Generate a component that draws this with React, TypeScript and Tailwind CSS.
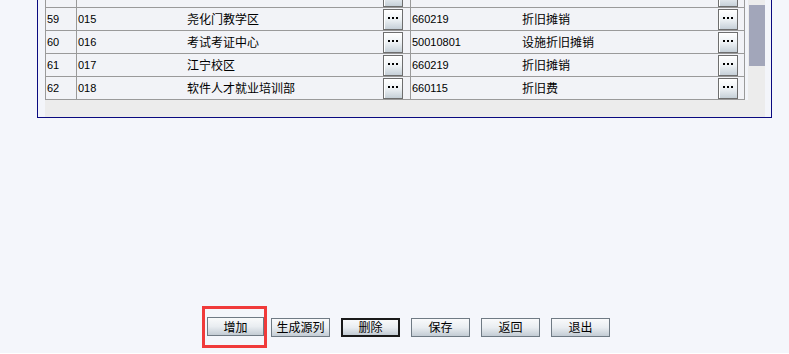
import React from "react";

type Row = { no: string; code: string; name: string; acct: string; acctName: string };

// rows visible in the grid (row 58 only shows its bottom edge)
const rows: Row[] = [
  { no: "", code: "", name: "", acct: "", acctName: "" },
  { no: "59", code: "015", name: "尧化门教学区", acct: "660219", acctName: "折旧摊销" },
  { no: "60", code: "016", name: "考试考证中心", acct: "50010801", acctName: "设施折旧摊销" },
  { no: "61", code: "017", name: "江宁校区", acct: "660219", acctName: "折旧摊销" },
  { no: "62", code: "018", name: "软件人才就业培训部", acct: "660115", acctName: "折旧费" },
];

const numFont = { fontFamily: '"Liberation Sans", "DejaVu Sans", sans-serif' };
const cjkFont = { fontFamily: '"Noto Sans CJK SC", "Liberation Sans", sans-serif' };

function DotsButton() {
  return (
    <div className="ml-auto mr-[7px] flex h-[21px] w-[20px] items-center justify-center border border-[#6e6e6e] bg-gradient-to-b from-[#ffffff] via-[#eef2f5] to-[#c6d0d8] shadow-[inset_1px_1px_0_#ffffff]">
      <div className="mt-[-3px] flex gap-[2px]">
        <span className="h-[2px] w-[2px] bg-black" />
        <span className="h-[2px] w-[2px] bg-black" />
        <span className="h-[2px] w-[2px] bg-black" />
      </div>
    </div>
  );
}

function ToolButton({ label, focused }: { label: string; focused?: boolean }) {
  return (
    <button
      className={
        "flex h-[19px] w-[59px] items-center justify-center bg-gradient-to-b from-[#f9fafb] via-[#e9edf1] to-[#c3ccd4] text-[12px] leading-none text-black" +
        (focused ? " border-2 border-[#1a1a1a]" : " border border-[#6f7a84]")
      }
      style={cjkFont}
    >
      {label}
    </button>
  );
}

export default function App() {
  return (
    <div className="flex h-[354px] w-[789px] flex-col overflow-hidden border-b border-white bg-[#f4f6fb]">
      {/* grid frame, top is scrolled out of view */}
      <div className="mt-[-15px] ml-[37px] flex w-[735px] flex-col border-x border-b border-[#0a0a80] bg-[#f3f5fa] pl-[7px] pr-[6px]">
        <div className="flex">
          <div className="w-[700px] border-r border-[#9a9a9a]">
            {rows.map((r, i) => (
              <div key={i} className="grid h-[23px] grid-cols-[31px_334px_335px] border-b border-[#9a9a9a] bg-[#f2f3f7]">
                <div className="flex items-center border-l border-[#9a9a9a] pl-px text-[11px] text-black" style={numFont}>
                  {r.no}
                </div>
                <div className="flex items-center border-l border-[#9a9a9a]">
                  <span className="w-[110px] pl-px text-[11px] text-black" style={numFont}>
                    {r.code}
                  </span>
                  <span className="text-[12px] text-black" style={cjkFont}>
                    {r.name}
                  </span>
                  <DotsButton />
                </div>
                <div className="flex items-center border-l border-[#9a9a9a]">
                  <span className="w-[111px] pl-px text-[11px] text-black" style={numFont}>
                    {r.acct}
                  </span>
                  <span className="text-[12px] text-black" style={cjkFont}>
                    {r.acctName}
                  </span>
                  <DotsButton />
                </div>
              </div>
            ))}
          </div>
          <div className="w-[3px]" />
          {/* vertical scrollbar */}
          <div className="w-[17px] bg-[#ececec]">
            <div className="mt-[20px] ml-px h-[61px] w-[16px] bg-[#a2a6ba]" />
          </div>
        </div>
        {/* horizontal scrollbar strip */}
        <div className="h-[17px] w-[720px] bg-[#ececec]" />
      </div>

      {/* bottom toolbar */}
      <div className="mt-[188px] ml-[202px] flex items-center">
        <div className="border-[3px] border-[#f03a3a] pt-[8px] pb-[9px] pl-[2px]">
          <div className="w-[57px] [&>button]:w-[57px]">
            <ToolButton label="增加" />
          </div>
        </div>
        <div className="ml-[4px] flex items-center gap-[11px]">
          <ToolButton label="生成源列" />
          <ToolButton label="删除" focused />
          <ToolButton label="保存" />
          <ToolButton label="返回" />
          <ToolButton label="退出" />
        </div>
      </div>
    </div>
  );
}
